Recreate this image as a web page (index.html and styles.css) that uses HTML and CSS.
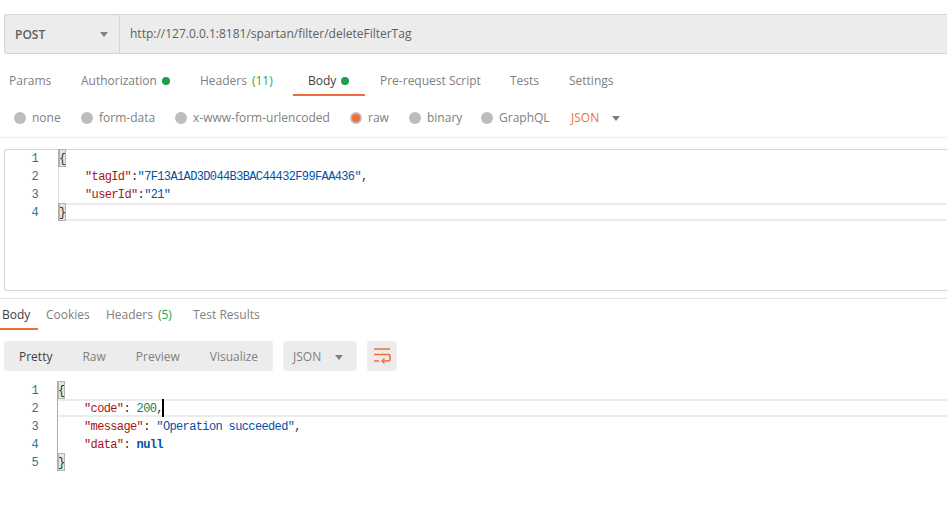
FILE: index.html
```html
<!DOCTYPE html>
<html lang="en">
<head>
<meta charset="utf-8">
<title>POST deleteFilterTag</title>
<link rel="stylesheet" href="styles.css">
</head>
<body>
<div class="urlbar">
  <div class="method"><span>POST</span><i class="caret"></i></div>
  <div class="url">http://127.0.0.1:8181/spartan/filter/deleteFilterTag</div>
</div>
<nav class="tabs req-tabs">
  <span class="tab t-params">Params</span>
  <span class="tab t-auth">Authorization<i class="dot"></i></span>
  <span class="tab t-head">Headers<em>(11)</em></span>
  <span class="tab t-body active">Body<i class="dot"></i></span>
  <span class="tab t-pre">Pre-request Script</span>
  <span class="tab t-tests">Tests</span>
  <span class="tab t-set">Settings</span>
</nav>
<div class="radios">
  <span class="radio r-none"><i></i>none</span>
  <span class="radio r-form"><i></i>form-data</span>
  <span class="radio r-url"><i></i>x-www-form-urlencoded</span>
  <span class="radio r-raw on"><i></i>raw</span>
  <span class="radio r-bin"><i></i>binary</span>
  <span class="radio r-gql"><i></i>GraphQL</span>
  <span class="lang">JSON</span><i class="caret"></i>
</div>
<div class="editor">
  <div class="line"><span class="ln">1</span><span class="code"><b class="match">{</b></span></div>
  <div class="line"><span class="ln">2</span><span class="code ind"><span class="k">"tagId"</span>:<span class="s">"7F13A1AD3D044B3BAC44432F99FAA436"</span>,</span></div>
  <div class="line"><span class="ln">3</span><span class="code ind"><span class="k">"userId"</span>:<span class="s">"21"</span></span></div>
  <div class="line cur"><span class="ln">4</span><span class="code"><b class="match">}</b></span></div>
</div>
<nav class="tabs res-tabs">
  <span class="tab r-body active">Body</span>
  <span class="tab r-cook">Cookies</span>
  <span class="tab r-head">Headers<em>(5)</em></span>
  <span class="tab r-test">Test Results</span>
</nav>
<div class="toolbar">
  <div class="seg">
    <span class="sel">Pretty</span><span>Raw</span><span>Preview</span><span>Visualize</span>
  </div>
  <div class="fmt"><span>JSON</span><i class="caret"></i></div>
  <div class="wrap">
    <svg width="18" height="16" viewBox="0 0 18 16" fill="none" stroke="#f26b3a" stroke-width="1.600"><path d="M1 1H17M1 6.500H15.500Q17 6.500 17 8V11Q17 13 15 13H9M1 13H6"/><path d="M11.500 10.500L9 13L11.500 15.500" stroke-width="1.400"/></svg>
  </div>
</div>
<div class="response">
  <div class="line"><span class="ln">1</span><span class="code"><b class="match">{</b></span></div>
  <div class="line cur"><span class="ln">2</span><span class="code ind"><span class="k">"code"</span>: <span class="n">200</span>,<i class="cursor"></i></span></div>
  <div class="line"><span class="ln">3</span><span class="code ind"><span class="k">"message"</span>: <span class="s">"Operation succeeded"</span>,</span></div>
  <div class="line"><span class="ln">4</span><span class="code ind"><span class="k">"data"</span>: <span class="kw">null</span></span></div>
  <div class="line"><span class="ln">5</span><span class="code"><b class="match">}</b></span></div>
</div>
</body>
</html>
```

FILE: styles.css
```css
* { box-sizing: border-box; }
html, body { margin: 0; height: 100%; overflow: hidden; background: #fff; }
body { width: 947px; height: 523px; padding-top: 14px; font: 12px/18px "Open Sans", sans-serif; color: #808080; }
i { display: block; font-style: normal; }
em { margin-left: 5px; font-style: normal; color: #26a65b; }

.urlbar { display: flex; height: 40px; margin-left: 4px; background: #ececec; border: 1px solid #d4d4d4; border-right: 0; border-radius: 3px 0 0 3px; color: #505050; }
.method { display: flex; align-items: center; justify-content: space-between; width: 115px; padding: 1px 11px 0 10px; border-right: 1px solid #d4d4d4; font-size: 12px; font-weight: 600; color: #606060; }
.caret { width: 0; height: 0; border: 4px solid transparent; border-top: 5px solid #808080; border-bottom: 0; }
.url { padding-left: 10px; line-height: 38px; font-size: 12px; color: #606060; }

.tabs { display: flex; }
.tab { display: flex; align-items: center; height: 100%; white-space: nowrap; }
.tab.active { color: #404040; border-bottom: 2px solid #f26b3a; }
.dot { width: 8px; height: 8px; margin-left: 5px; border-radius: 50%; background: #1e9e4a; }

.req-tabs { height: 35px; margin-top: 7px; padding-left: 9px; }
.req-tabs .tab { padding-top: 5px; }
.req-tabs .tab.active { padding-top: 7px; }
.t-params { width: 72px; }
.t-auth { width: 119px; }
.t-head { width: 93px; }
.t-body { width: 72px; padding-left: 15px; margin-right: 15px; }
.t-pre { width: 130px; }
.t-tests { width: 59px; }

.radios { display: flex; align-items: center; height: 42px; padding: 3px 0 0 14px; border-bottom: 1px solid #ececec; }
.radio { display: flex; align-items: center; }
.radio i { width: 12px; height: 12px; margin-right: 6px; border-radius: 50%; background: #bdbdbd; }
.radio.on i { background: #f26b3a; border: 2px solid #bdbdbd; }
.r-none { width: 67px; }
.r-form { width: 94px; }
.r-url { width: 175px; }
.r-raw { width: 59px; }
.r-bin { width: 72px; }
.r-gql { width: 90px; }
.lang { width: 41px; color: #f26b3a; }

.editor { height: 142px; margin: 11px 0 0 4px; border: 1px solid #d4d4d4; border-right: 0; border-radius: 3px 0 0 3px; }
.editor .line { margin-left: -5px; }
.editor .line:first-child { margin-top: -1px; }
.editor .code { margin-left: 20px; }
.editor .ind { border-left-color: #e2e2e2; }

.line { display: flex; height: 18px; font: 12px/20px "Liberation Mono", monospace; letter-spacing: -.63px; color: #303030; }
.ln { width: 38px; text-align: right; color: #237893; flex: none; }
.code { flex: 1; margin-left: 19px; white-space: pre; border-left: 1px solid #adadad; }
.ind { padding-left: 26px; }
.match { display: inline-block; vertical-align: top; width: 7px; height: 18px; letter-spacing: 0; font-weight: 400; background: #e3e8dc; outline: 1px solid #b4b4b4; outline-offset: -1px; text-align: center; }
.cur .code { box-shadow: inset 0 2px #ececec, inset 0 -2px #ececec; }
.k { color: #a31515; }
.s { color: #0451a5; }
.n { color: #098658; }
.kw { color: #0451a5; font-weight: 700; }

.res-tabs { height: 32px; margin-top: 7px; border-top: 1px solid #e0e0e0; }
.res-tabs .tab.active { padding-top: 2px; }
.r-body { width: 38px; padding-left: 2px; }
.r-cook { width: 60px; padding-left: 8px; }
.r-head { width: 87px; padding-left: 8px; }
.r-test { margin-left: 8px; }

.toolbar { display: flex; height: 30px; margin: 11px 0 0 4px; gap: 10px; }
.seg, .fmt, .wrap { display: flex; align-items: center; background: #ececec; border-radius: 3px; }
.seg { width: 269px; padding: 2px 0 0 15px; }
.seg span { margin-right: 30px; }
.seg .sel { color: #404040; }
.fmt { width: 74px; padding: 2px 14px 0 10px; justify-content: space-between; }
.wrap { width: 30px; justify-content: center; }

.response { margin-top: 10px; }
.response .code { position: relative; }
.cursor { position: absolute; left: 104px; top: 0; width: 2px; height: 18px; background: #000; }
```
